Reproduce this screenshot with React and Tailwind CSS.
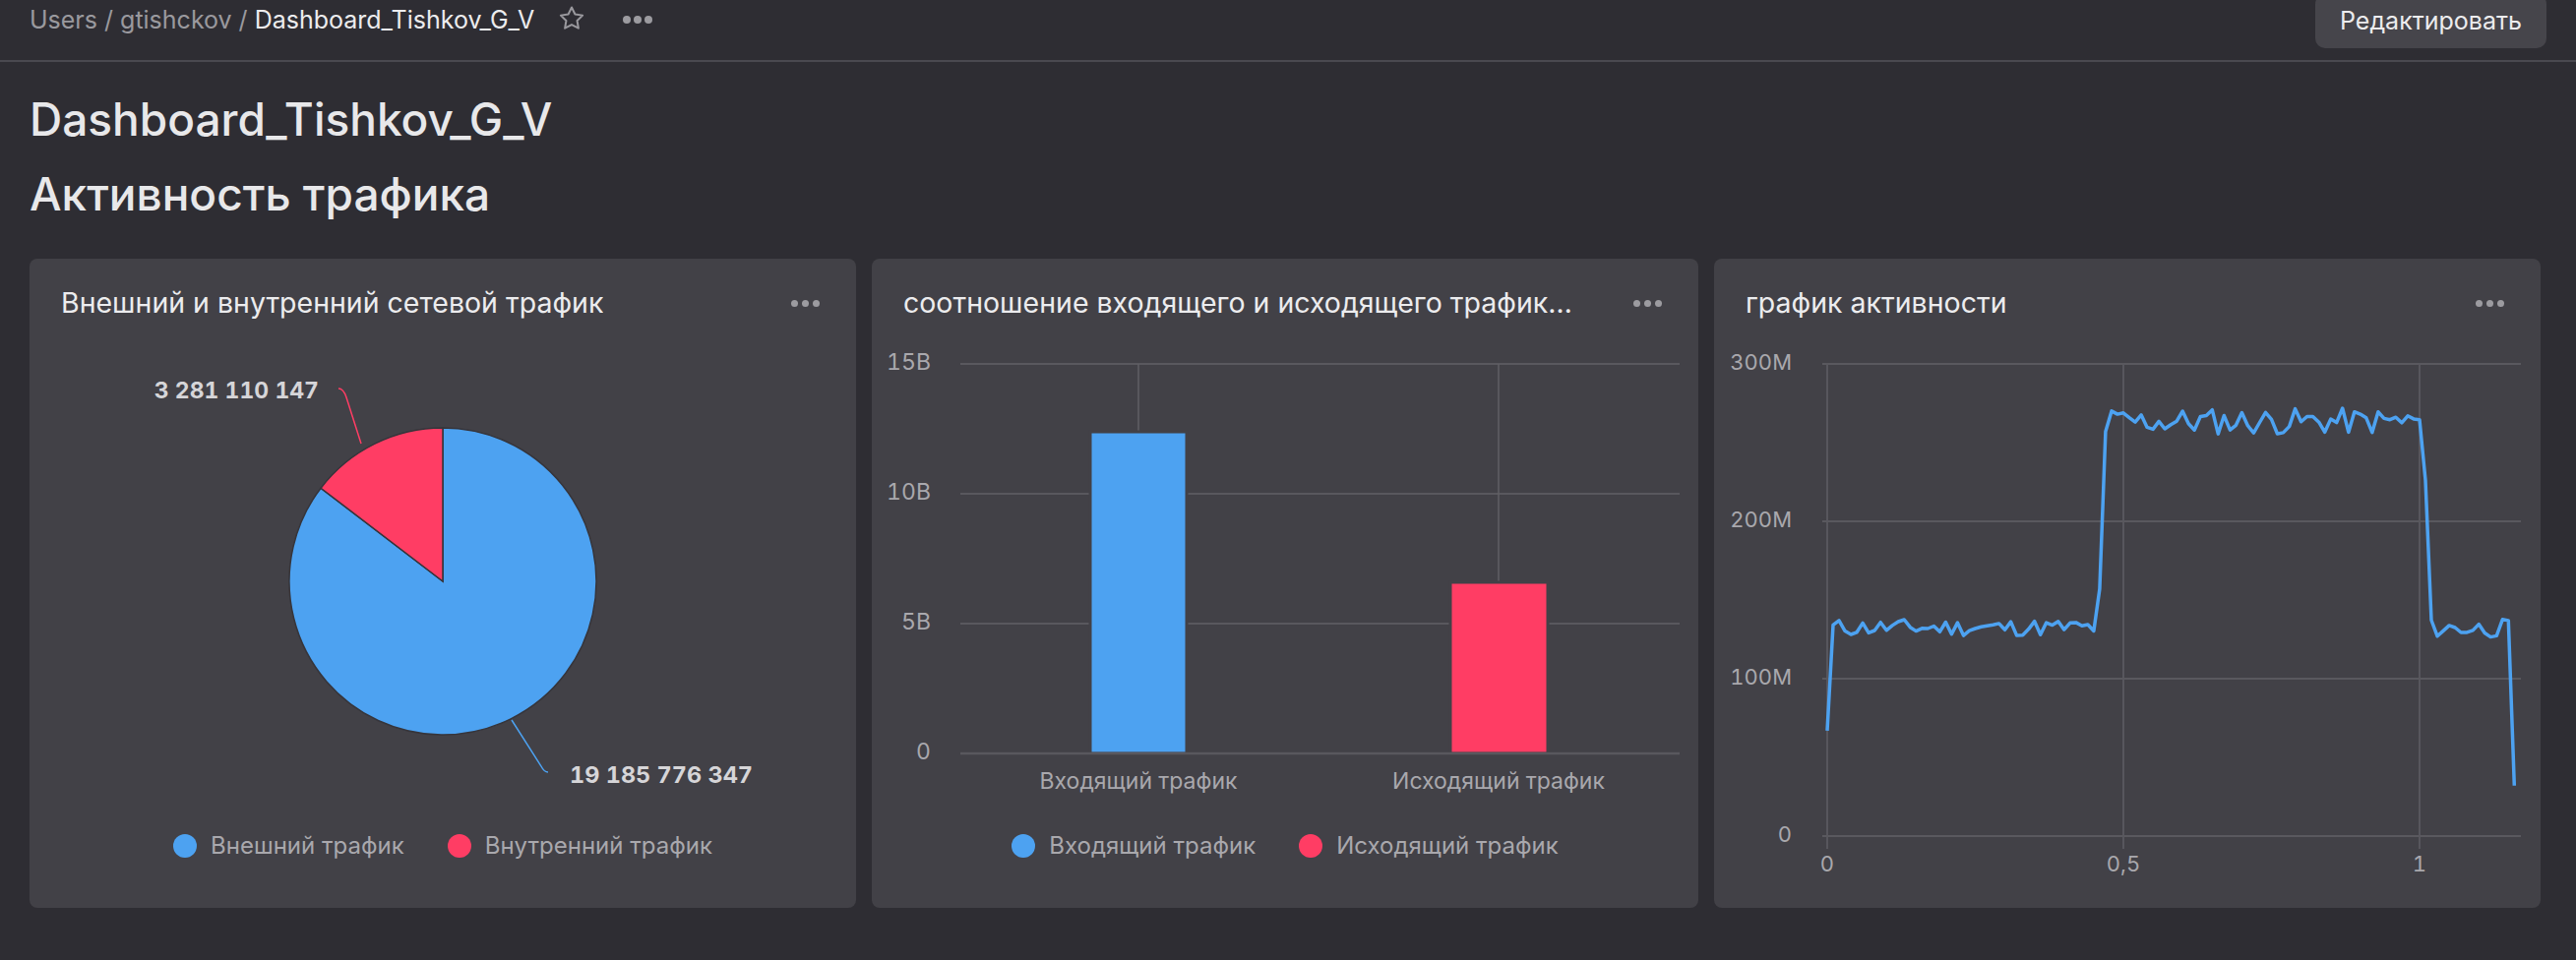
import React from "react";

const BLUE = "#4da2f1";
const RED = "#ff3d64";
const GRID = "#59585e";
const AXIS = "#a9a8ad";
const FONT = "Inter, 'Noto Sans', sans-serif";
const NUM = { fontVariantNumeric: "tabular-nums" };

function Dots({ size = "w-[7px] h-[7px]", color = "bg-[#9c9ba0]", gap = "gap-[4px]" }) {
  return (
    <div className={`flex items-center ${gap}`}>
      <span className={`${size} rounded-full ${color}`} />
      <span className={`${size} rounded-full ${color}`} />
      <span className={`${size} rounded-full ${color}`} />
    </div>
  );
}

function Card({ title, children }) {
  return (
    <div className="w-[840px] h-[660px] rounded-[8px] bg-[#424147] flex flex-col overflow-hidden">
      <div className="h-[90px] flex items-center justify-between pl-[32px] pr-[37px]">
        <div className="text-[28.5px] text-[#ececee] truncate max-w-[692px]">{title}</div>
        <Dots />
      </div>
      {children}
    </div>
  );
}

function Legend({ items }) {
  return (
    <div className="h-[54px] flex items-center justify-center gap-[44px]">
      {items.map((it) => (
        <div key={it.label} className="flex items-center gap-[14px]">
          <span className="w-[24px] h-[24px] rounded-full" style={{ background: it.color }} />
          <span className="text-[24px] text-[#a9a8ad]">{it.label}</span>
        </div>
      ))}
    </div>
  );
}

function PieWidget() {
  const cx = 420, cy = 328, r = 156;
  const a = (52.6 * Math.PI) / 180;
  const px = cx - r * Math.sin(a);
  const py = cy - r * Math.cos(a);
  return (
    <Card title="Внешний и внутренний сетевой трафик">
      <svg width="840" height="480" viewBox="0 90 840 480" style={{ fontFamily: FONT, ...NUM }}>
        <path d={`M${cx},${cy} L${px},${py} A${r},${r} 0 1 0 ${cx},${cy - r} Z`} fill={BLUE} stroke="#36353b" strokeWidth="1.5" />
        <path d={`M${cx},${cy} L${cx},${cy - r} A${r},${r} 0 0 0 ${px},${py} Z`} fill={RED} stroke="#36353b" strokeWidth="1.5" />
        <path d="M314,132 C318,132 320,135 322,141 L337,188" fill="none" stroke={RED} strokeWidth="1.5" />
        <path d="M490,469 L520,516 C522,520 524,522 527,522" fill="none" stroke={BLUE} strokeWidth="1.5" />
        <text x="294" y="136" textAnchor="end" dominantBaseline="middle" fontSize="23" fontWeight="700" fill="#d6d5d8">
          3 281 110 147
        </text>
        <text x="549" y="527" dominantBaseline="middle" fontSize="23.5" fontWeight="700" fill="#d6d5d8">
          19 185 776 347
        </text>
      </svg>
      <Legend
        items={[
          { label: "Внешний трафик", color: BLUE },
          { label: "Внутренний трафик", color: RED },
        ]}
      />
    </Card>
  );
}

function BarWidget() {
  const grid = [
    { y: 107, t: "15B" },
    { y: 239, t: "10B" },
    { y: 371, t: "5B" },
    { y: 503, t: "0" },
  ];
  return (
    <Card title="соотношение входящего и исходящего трафика по времени">
      <svg width="840" height="480" viewBox="0 90 840 480" style={{ fontFamily: FONT, ...NUM }}>
        {grid.map((g) => (
          <g key={g.t}>
            <line x1="90" x2="821" y1={g.y} y2={g.y} stroke={GRID} strokeWidth="2" />
            <text x="60" y={g.y} textAnchor="end" dominantBaseline="middle" fontSize="23" fill={AXIS}>
              {g.t}
            </text>
          </g>
        ))}
        <line x1="271" x2="271" y1="107" y2="503" stroke="#605f65" strokeWidth="1.5" />
        <line x1="637" x2="637" y1="107" y2="503" stroke="#605f65" strokeWidth="1.5" />
        <rect x="222" y="176" width="98" height="327" fill={BLUE} stroke="#424147" strokeWidth="3" />
        <rect x="588" y="329" width="99" height="174" fill={RED} stroke="#424147" strokeWidth="3" />
        <line x1="90" x2="821" y1="503" y2="503" stroke={GRID} strokeWidth="2.5" />
        <text x="271" y="533" textAnchor="middle" dominantBaseline="middle" fontSize="23" fill={AXIS}>
          Входящий трафик
        </text>
        <text x="637" y="533" textAnchor="middle" dominantBaseline="middle" fontSize="23" fill={AXIS}>
          Исходящий трафик
        </text>
      </svg>
      <Legend
        items={[
          { label: "Входящий трафик", color: BLUE },
          { label: "Исходящий трафик", color: RED },
        ]}
      />
    </Card>
  );
}

function seeded(seed) {
  let s = seed;
  return () => {
    s = (s * 9301 + 49297) % 233280;
    return s / 233280;
  };
}

function buildSeries() {
  const r = seeded(11);
  const pts = [[0, 67]];
  for (let i = 1; i <= 45; i++) pts.push([i / 100, 127 + r() * 11]);
  pts.push([0.46, 157]);
  pts.push([0.47, 257]);
  for (let i = 48; i <= 100; i++) pts.push([i / 100, 255 + r() * 17]);
  pts.push([1.01, 226]);
  for (let i = 102; i <= 115; i++) pts.push([i / 100, 126 + r() * 12]);
  pts.push([1.16, 32]);
  return pts;
}

function LineWidget() {
  const X = (x) => 115 + x * 602;
  const Y = (v) => 587 - v * 1.6;
  const pts = buildSeries();
  const d = pts.map((p, i) => `${i ? "L" : "M"}${X(p[0]).toFixed(1)},${Y(p[1]).toFixed(1)}`).join(" ");
  const grid = [
    { v: 300, t: "300M" },
    { v: 200, t: "200M" },
    { v: 100, t: "100M" },
    { v: 0, t: "0" },
  ];
  const xs = [
    { x: 0, t: "0" },
    { x: 0.5, t: "0,5" },
    { x: 1, t: "1" },
  ];
  return (
    <Card title="график активности">
      <svg width="840" height="570" viewBox="0 90 840 570" style={{ fontFamily: FONT, ...NUM }}>
        {xs.map((g) => (
          <line key={g.t} x1={X(g.x)} x2={X(g.x)} y1="107" y2="600" stroke="#5f5e64" strokeWidth="1.5" />
        ))}
        {grid.map((g) => (
          <g key={g.t}>
            <line x1="110" x2="820" y1={Y(g.v)} y2={Y(g.v)} stroke={GRID} strokeWidth="2" />
            <text x="79" y={Y(g.v)} textAnchor="end" dominantBaseline="middle" fontSize="22" fill={AXIS}>
              {g.t}
            </text>
          </g>
        ))}
        {xs.map((g) => (
          <text key={g.t} x={X(g.x)} y="617" textAnchor="middle" dominantBaseline="middle" fontSize="22" fill={AXIS}>
            {g.t}
          </text>
        ))}
        <path d={d} fill="none" stroke={BLUE} strokeWidth="3.5" strokeLinejoin="round" />
      </svg>
    </Card>
  );
}

export default function App() {
  return (
    <div className="min-h-screen bg-[#2e2d33] text-[#ececee]" style={{ fontFamily: FONT }}>
      <div className="h-[63px] border-b-2 border-[#4a4950] flex items-start justify-between pl-[30px] pr-[30px]">
        <div className="h-[42px] flex items-center gap-[23px]">
          <div className="text-[25px]">
            <span className="text-[#9a999e]">Users / gtishckov / </span>
            <span className="text-[#ececee]">Dashboard_Tishkov_G_V</span>
          </div>
          <svg width="30" height="30" viewBox="0 0 24 24" fill="none" stroke="#9a999e" strokeWidth="1.6" strokeLinejoin="round" className="-mt-[5px]">
            <path d="M12 2.8l2.75 5.6 6.15.9-4.45 4.33 1.05 6.12L12 16.86l-5.5 2.9 1.05-6.13L3.1 9.3l6.15-.9z" />
          </svg>
          <div className="ml-[14px] -mt-[3px]">
            <Dots size="w-[8px] h-[8px]" gap="gap-[3px]" />
          </div>
        </div>
        <button className="-mt-[6px] h-[55px] px-[25px] rounded-[10px] bg-[#46454b] text-[25px] text-[#ececee]">
          Редактировать
        </button>
      </div>
      <div className="pl-[30px] pt-[30px]">
        <h1 className="h-[56px] leading-[56px] text-[46px] font-medium text-[#e8e8ea]">Dashboard_Tishkov_G_V</h1>
        <h2 className="mt-[20px] h-[56px] leading-[56px] text-[46px] font-medium text-[#e8e8ea]">Активность трафика</h2>
      </div>
      <div className="pl-[30px] pt-[38px] pb-[54px] flex gap-[16px]">
        <PieWidget />
        <BarWidget />
        <LineWidget />
      </div>
    </div>
  );
}
